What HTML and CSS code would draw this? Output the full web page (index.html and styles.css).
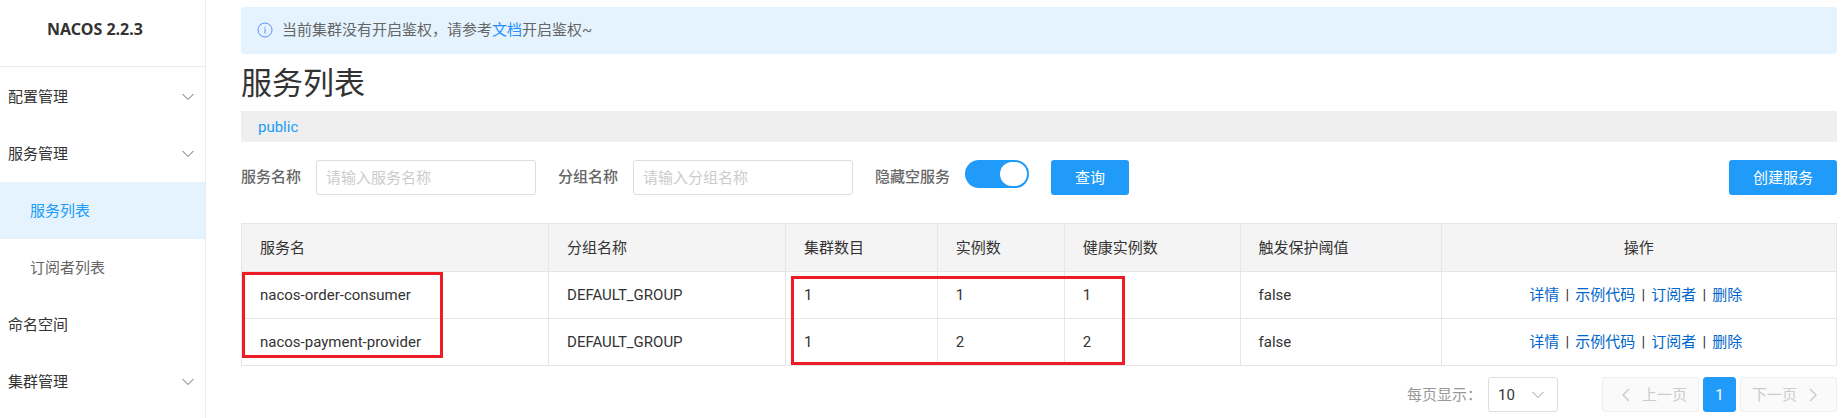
FILE: index.html
```html
<!DOCTYPE html>
<html lang="zh-CN">
<head>
<meta charset="utf-8">
<title>Nacos</title>
<link rel="stylesheet" href="styles.css">
</head>
<body>
<div class="layout">
  <aside class="sidebar">
    <div class="brand">NACOS 2.2.3</div>
    <nav class="menu">
      <a class="menu-item" href="#">配置管理<svg class="chevron" viewBox="0 0 12 8"><path d="M0.5 1l5.500 5.500L11.500 1"/></svg></a>
      <a class="menu-item" href="#">服务管理<svg class="chevron" viewBox="0 0 12 8"><path d="M0.5 1l5.500 5.500L11.500 1"/></svg></a>
      <a class="menu-item sub active" href="#">服务列表</a>
      <a class="menu-item sub" href="#">订阅者列表</a>
      <a class="menu-item" href="#">命名空间</a>
      <a class="menu-item" href="#">集群管理<svg class="chevron" viewBox="0 0 12 8"><path d="M0.5 1l5.500 5.500L11.500 1"/></svg></a>
    </nav>
  </aside>
  <main class="main">
    <div class="notice">
      <svg class="info" viewBox="0 0 16 16"><circle cx="8" cy="8" r="7"/><path d="M8 4.500v1M8 6.500v5"/></svg>
      <span>当前集群没有开启鉴权，请参考<a href="#">文档</a>开启鉴权~</span>
    </div>
    <h1 class="title">服务列表</h1>
    <div class="namespace"><a href="#">public</a></div>
    <form class="filters">
      <div class="field">
        <label for="service">服务名称</label>
        <input class="text" id="service" type="text" placeholder="请输入服务名称">
      </div>
      <div class="field">
        <label for="group">分组名称</label>
        <input class="text" id="group" type="text" placeholder="请输入分组名称">
      </div>
      <div class="field">
        <label for="hide-empty">隐藏空服务</label>
        <input class="switch" id="hide-empty" type="checkbox" role="switch" checked>
      </div>
      <button class="btn" type="button">查询</button>
      <button class="btn create" type="button">创建服务</button>
    </form>
    <div class="table-wrap">
      <table class="services">
        <colgroup>
          <col class="c-name"><col class="c-group"><col class="c-cluster"><col class="c-inst"><col class="c-healthy"><col class="c-protect"><col>
        </colgroup>
        <thead>
          <tr><th>服务名</th><th>分组名称</th><th>集群数目</th><th>实例数</th><th>健康实例数</th><th>触发保护阈值</th><th class="ops">操作</th></tr>
        </thead>
        <tbody>
          <tr><td>nacos-order-consumer</td><td>DEFAULT_GROUP</td><td>1</td><td>1</td><td>1</td><td>false</td>
            <td class="ops"><a href="#">详情</a><span class="sep">|</span><a href="#">示例代码</a><span class="sep">|</span><a href="#">订阅者</a><span class="sep">|</span><a href="#">删除</a></td></tr>
          <tr><td>nacos-payment-provider</td><td>DEFAULT_GROUP</td><td>1</td><td>2</td><td>2</td><td>false</td>
            <td class="ops"><a href="#">详情</a><span class="sep">|</span><a href="#">示例代码</a><span class="sep">|</span><a href="#">订阅者</a><span class="sep">|</span><a href="#">删除</a></td></tr>
        </tbody>
      </table>
      <div class="mark mark-names"></div>
      <div class="mark mark-counts"></div>
    </div>
    <div class="pager">
      <label class="size-label" for="size">每页显示：</label>
      <div class="size">
        <select id="size"><option>10</option></select>
        <svg class="chevron" viewBox="0 0 12 8"><path d="M0.5 1l5.500 5.500L11.500 1"/></svg>
      </div>
      <button class="page prev" type="button" disabled><svg class="arrow" viewBox="0 0 8 14"><path d="M7 1L1 7l6 6"/></svg>上一页</button>
      <button class="page current" type="button">1</button>
      <button class="page next" type="button" disabled>下一页<svg class="arrow" viewBox="0 0 8 14"><path d="M1 1l6 6l-6 6"/></svg></button>
    </div>
  </main>
</div>
</body>
</html>
```
FILE: styles.css
```css
* { box-sizing: border-box; }
body {
  margin: 0;
  background: #fff;
  color: #333;
  font: 15px/20px Roboto, "Noto Sans CJK SC", sans-serif;
}
a { color: #209bfa; text-decoration: none; }
button, input, select { font: inherit; }
svg { fill: none; stroke: currentColor; }

.layout { display: flex; min-height: 100vh; }
.sidebar { flex: none; width: 206px; border-right: 1px solid #ebebeb; }
.brand {
  padding: 19px 15px 27px 0;
  border-bottom: 1px solid #ebebeb;
  text-align: center;
  font: bold 16px/20px "Noto Sans", sans-serif;
}
.menu { padding-top: 1px; }
.menu-item {
  display: flex;
  align-items: center;
  justify-content: space-between;
  height: 57px;
  padding: 0 11px 0 8px;
  color: #333;
}
.menu-item.sub { padding-left: 30px; color: #666; }
.menu-item.active { background: #e4f3fe; color: #209bfa; }
.chevron { width: 12px; height: 8px; color: #666; }

.main { flex: 1; min-width: 0; padding: 7px 6px 6px 35px; }
.notice {
  display: flex;
  align-items: center;
  gap: 9px;
  height: 47px;
  padding: 0 16px 2px;
  border-radius: 3px;
  background: #e4f3fe;
  color: #666;
}
.notice a { color: #298dff; }
.info { width: 16px; height: 16px; color: #5c8dff; }
.title { margin: 10px 0 7px; font-size: 31px; line-height: 40px; font-weight: 400; }
.namespace { padding: 6px 17px 5px; background: #efefef; }

.filters { display: flex; gap: 22px; margin-top: 18px; }
.field { display: flex; gap: 15px; }
.field label { line-height: 35px; font-weight: 500; color: #666; }
.text {
  width: 220px;
  height: 35px;
  padding: 0 9px;
  border: 1px solid #ddd;
  border-radius: 3px;
  background: #fff;
}
.text::placeholder { color: #ccc; }
.switch {
  appearance: none;
  display: flex;
  justify-content: flex-end;
  width: 64px;
  height: 28px;
  margin: 0;
  padding: 2px;
  border-radius: 14px;
  background: #209bfa;
}
.switch::before { content: ""; width: 27px; height: 24px; border-radius: 12px; background: #fff; }
.btn {
  height: 35px;
  padding: 0 24px;
  border: 0;
  border-radius: 3px;
  background: #209bfa;
  color: #fff;
}
.create { margin-left: auto; }

.table-wrap { position: relative; margin-top: 28px; }
.services { width: 100%; table-layout: fixed; border-collapse: separate; border-spacing: 0; border: solid #e6e6e6; border-width: 1px 0 0 1px; }
.c-name { width: 19.25%; }
.c-group { width: 14.85%; }
.c-cluster { width: 9.52%; }
.c-inst { width: 7.96%; }
.c-healthy { width: 11.03%; }
.c-protect { width: 12.6%; }
.services th, .services td {
  height: 47px;
  padding: 0 18px;
  border: solid #e6e6e6;
  border-width: 0 1px 1px 0;
  text-align: left;
  font-weight: 400;
}
.services th { height: 48px; background: #f4f4f4; }
.services .ops { text-align: center; }
.services td.ops { padding-right: 24px; }
.ops a { color: #06c; }
.sep { display: inline-block; width: 16px; text-align: center; }
.mark { position: absolute; border: 3px solid #ee1c25; pointer-events: none; }
.mark-names { left: 1px; top: 49px; width: 201px; height: 86px; }
.mark-counts { left: 550px; top: 53px; width: 334px; height: 89px; }

.pager { display: flex; justify-content: flex-end; align-items: center; gap: 4px; margin-top: 11px; }
.size-label { color: #999; }
.size { display: grid; align-items: center; width: 70px; margin: 0 40px 0 2px; }
.size select, .size .chevron { grid-area: 1 / 1; }
.size select {
  appearance: none;
  width: 100%;
  height: 35px;
  padding: 0 9px;
  border: 1px solid #ddd;
  border-radius: 3px;
  background: #fff;
  color: #333;
}
.size .chevron { justify-self: end; margin-right: 14px; color: #999; pointer-events: none; }
.page {
  display: flex;
  align-items: center;
  justify-content: center;
  gap: 12px;
  min-width: 33px;
  height: 35px;
  padding: 0;
  border: 1px solid #eee;
  border-radius: 3px;
  background: #fafafa;
  color: #ccc;
}
.page.prev { padding: 0 11px 0 19px; }
.page.next { padding: 0 19px 0 11px; }
.page.current { border-color: #209bfa; background: #209bfa; color: #fff; }
.arrow { width: 8px; height: 14px; stroke-width: 1.5; }
```
